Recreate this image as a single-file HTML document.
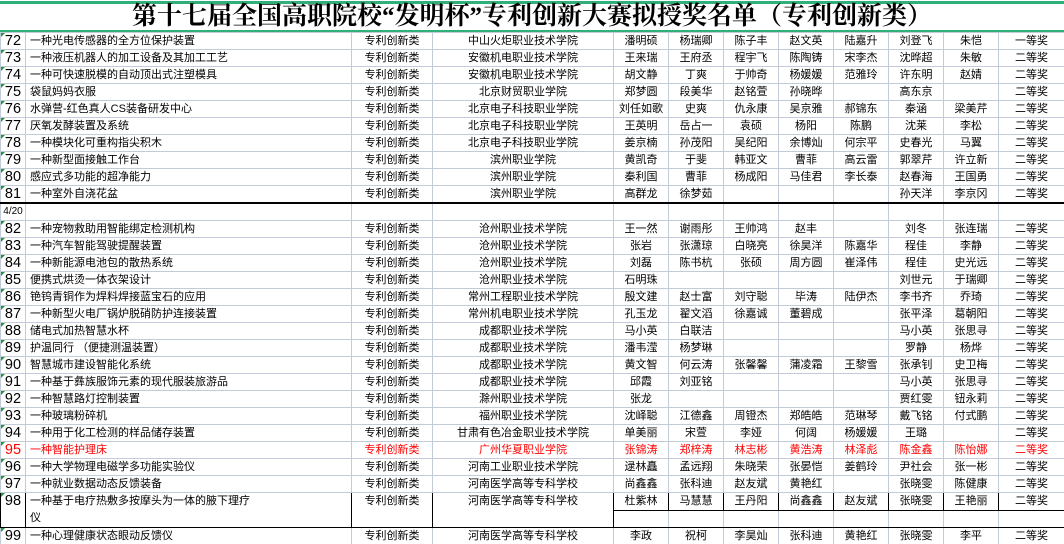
<!DOCTYPE html>
<html><head><meta charset="utf-8">
<style>
html,body{margin:0;padding:0;background:#fff;width:1064px;height:544px;overflow:hidden;}
body{font-family:"Liberation Sans","Noto Sans CJK SC",sans-serif;position:relative;}
.gl{position:absolute;left:0;width:1064px;height:3px;background:#2fb07a;}
.title{position:absolute;left:0;top:2px;width:1064px;height:28px;text-align:center;font-family:"Liberation Serif","Noto Serif CJK SC",serif;font-weight:bold;font-size:25px;line-height:30px;color:#000;}
table{position:absolute;left:0;top:32px;border-collapse:collapse;table-layout:fixed;width:1064px;}
td{border:1px solid #c3cad8;height:16px;padding:0;font-size:11px;line-height:16px;text-align:center;white-space:nowrap;overflow:hidden;color:#000;}
td.n{font-size:14.5px;text-align:center;position:relative;}
td.n::before{content:"";position:absolute;left:0;top:0;border-top:4px solid #1a9a3a;border-right:4px solid transparent;}
td.t{text-align:left;padding-left:4px;}
tr.red td{color:#ff0000;}
tr.thick td{border-bottom:2px solid #000;}
td.bk{border:1px solid #000;}
.sm{font-size:10px;}
</style></head><body>
<div class="gl" style="top:1px"></div>
<div class="title">第十七届全国高职院校“发明杯”专利创新大赛拟授奖名单（专利创新类）</div>
<div class="gl" style="top:30px"></div>
<table>
<colgroup><col style="width:25px"><col style="width:326px"><col style="width:81px"><col style="width:181px"><col style="width:55px"><col style="width:55px"><col style="width:55px"><col style="width:55px"><col style="width:55px"><col style="width:55px"><col style="width:55px"><col style="width:66px"></colgroup>
<tr><td class="n">72</td><td class="t">一种光电传感器的全方位保护装置</td><td>专利创新类</td><td>中山火炬职业技术学院</td><td>潘明硕</td><td>杨瑞卿</td><td>陈子丰</td><td>赵文英</td><td>陆嘉升</td><td>刘登飞</td><td>朱恺</td><td>一等奖</td></tr>
<tr><td class="n">73</td><td class="t">一种液压机器人的加工设备及其加工工艺</td><td>专利创新类</td><td>安徽机电职业技术学院</td><td>王来瑞</td><td>王府丞</td><td>程宇飞</td><td>陈陶铸</td><td>宋李杰</td><td>沈晔超</td><td>朱敏</td><td>二等奖</td></tr>
<tr><td class="n">74</td><td class="t">一种可快速脱模的自动顶出式注塑模具</td><td>专利创新类</td><td>安徽机电职业技术学院</td><td>胡文静</td><td>丁爽</td><td>于帅奇</td><td>杨媛媛</td><td>范雅玲</td><td>许东明</td><td>赵婧</td><td>二等奖</td></tr>
<tr><td class="n">75</td><td class="t">袋鼠妈妈衣服</td><td>专利创新类</td><td>北京财贸职业学院</td><td>郑梦圆</td><td>段美华</td><td>赵铭萱</td><td>孙晓晔</td><td></td><td>高东京</td><td></td><td>二等奖</td></tr>
<tr><td class="n">76</td><td class="t">水弹营-红色真人CS装备研发中心</td><td>专利创新类</td><td>北京电子科技职业学院</td><td>刘任如歌</td><td>史爽</td><td>仇永康</td><td>吴京雅</td><td>郝锦东</td><td>秦涵</td><td>梁美芹</td><td>二等奖</td></tr>
<tr><td class="n">77</td><td class="t">厌氧发酵装置及系统</td><td>专利创新类</td><td>北京电子科技职业学院</td><td>王英明</td><td>岳占一</td><td>袁硕</td><td>杨阳</td><td>陈鹏</td><td>沈莱</td><td>李松</td><td>二等奖</td></tr>
<tr><td class="n">78</td><td class="t">一种模块化可重构指尖积木</td><td>专利创新类</td><td>北京电子科技职业学院</td><td>姜京楠</td><td>孙茂阳</td><td>吴纪阳</td><td>余博灿</td><td>何宗平</td><td>史春光</td><td>马翼</td><td>二等奖</td></tr>
<tr><td class="n">79</td><td class="t">一种新型面接触工作台</td><td>专利创新类</td><td>滨州职业学院</td><td>黄凯奇</td><td>于斐</td><td>韩亚文</td><td>曹菲</td><td>高云雷</td><td>郭翠芹</td><td>许立新</td><td>二等奖</td></tr>
<tr><td class="n">80</td><td class="t">感应式多功能的超净能力</td><td>专利创新类</td><td>滨州职业学院</td><td>秦利国</td><td>曹菲</td><td>杨成阳</td><td>马佳君</td><td>李长泰</td><td>赵春海</td><td>王国勇</td><td>二等奖</td></tr>
<tr class="thick"><td class="n">81</td><td class="t">一种室外自浇花盆</td><td>专利创新类</td><td>滨州职业学院</td><td>高群龙</td><td>徐梦茹</td><td></td><td></td><td></td><td>孙天洋</td><td>李京冈</td><td>二等奖</td></tr>
<tr><td class="sm">4/20</td><td></td><td></td><td></td><td></td><td></td><td></td><td></td><td></td><td></td><td></td><td></td></tr>
<tr><td class="n">82</td><td class="t">一种宠物救助用智能绑定检测机构</td><td>专利创新类</td><td>沧州职业技术学院</td><td>王一然</td><td>谢雨彤</td><td>王帅鸿</td><td>赵丰</td><td></td><td>刘冬</td><td>张连瑞</td><td>二等奖</td></tr>
<tr><td class="n">83</td><td class="t">一种汽车智能驾驶提醒装置</td><td>专利创新类</td><td>沧州职业技术学院</td><td>张岩</td><td>张潇琼</td><td>白晓亮</td><td>徐昊洋</td><td>陈嘉华</td><td>程佳</td><td>李静</td><td>二等奖</td></tr>
<tr><td class="n">84</td><td class="t">一种新能源电池包的散热系统</td><td>专利创新类</td><td>沧州职业技术学院</td><td>刘磊</td><td>陈书杭</td><td>张硕</td><td>周方圆</td><td>崔泽伟</td><td>程佳</td><td>史光远</td><td>二等奖</td></tr>
<tr><td class="n">85</td><td class="t">便携式烘烫一体衣架设计</td><td>专利创新类</td><td>沧州职业技术学院</td><td>石明珠</td><td></td><td></td><td></td><td></td><td>刘世元</td><td>于瑞卿</td><td>二等奖</td></tr>
<tr><td class="n">86</td><td class="t">铯钨青铜作为焊料焊接蓝宝石的应用</td><td>专利创新类</td><td>常州工程职业技术学院</td><td>殷文建</td><td>赵士富</td><td>刘守聪</td><td>毕涛</td><td>陆伊杰</td><td>李书齐</td><td>乔琦</td><td>二等奖</td></tr>
<tr><td class="n">87</td><td class="t">一种新型火电厂锅炉脱硝防护连接装置</td><td>专利创新类</td><td>常州机电职业技术学院</td><td>孔玉龙</td><td>翟文滔</td><td>徐嘉诚</td><td>董碧成</td><td></td><td>张平泽</td><td>葛朝阳</td><td>二等奖</td></tr>
<tr><td class="n">88</td><td class="t">储电式加热智慧水杯</td><td>专利创新类</td><td>成都职业技术学院</td><td>马小英</td><td>白联洁</td><td></td><td></td><td></td><td>马小英</td><td>张思寻</td><td>二等奖</td></tr>
<tr><td class="n">89</td><td class="t">护温同行 （便捷测温装置）</td><td>专利创新类</td><td>成都职业技术学院</td><td>潘韦滢</td><td>杨梦琳</td><td></td><td></td><td></td><td>罗静</td><td>杨烨</td><td>二等奖</td></tr>
<tr><td class="n">90</td><td class="t">智慧城市建设智能化系统</td><td>专利创新类</td><td>成都职业技术学院</td><td>黄文智</td><td>何云涛</td><td>张馨馨</td><td>蒲凌霜</td><td>王黎雪</td><td>张承钊</td><td>史卫梅</td><td>二等奖</td></tr>
<tr><td class="n">91</td><td class="t">一种基于彝族服饰元素的现代服装旅游品</td><td>专利创新类</td><td>成都职业技术学院</td><td>邱霞</td><td>刘亚铭</td><td></td><td></td><td></td><td>马小英</td><td>张思寻</td><td>二等奖</td></tr>
<tr><td class="n">92</td><td class="t">一种智慧路灯控制装置</td><td>专利创新类</td><td>滁州职业技术学院</td><td>张龙</td><td></td><td></td><td></td><td></td><td>贾红雯</td><td>钮永莉</td><td>二等奖</td></tr>
<tr><td class="n">93</td><td class="t">一种玻璃粉碎机</td><td>专利创新类</td><td>福州职业技术学院</td><td>沈峄聪</td><td>江德鑫</td><td>周镫杰</td><td>郑皓皓</td><td>范琳琴</td><td>戴飞铭</td><td>付式鹏</td><td>二等奖</td></tr>
<tr><td class="n">94</td><td class="t">一种用于化工检测的样品储存装置</td><td>专利创新类</td><td>甘肃有色冶金职业技术学院</td><td>单美丽</td><td>宋萱</td><td>李娅</td><td>何阔</td><td>杨媛媛</td><td>王璐</td><td></td><td>二等奖</td></tr>
<tr class="red"><td class="n">95</td><td class="t">一种智能护理床</td><td>专利创新类</td><td>广州华夏职业学院</td><td>张锦涛</td><td>郑梓涛</td><td>林志彬</td><td>黄浩涛</td><td>林泽彪</td><td>陈金鑫</td><td>陈怡娜</td><td>二等奖</td></tr>
<tr><td class="n">96</td><td class="t">一种大学物理电磁学多功能实验仪</td><td>专利创新类</td><td>河南工业职业技术学院</td><td>逯林矗</td><td>孟远翔</td><td>朱晓荣</td><td>张晏恺</td><td>姜鹤玲</td><td>尹社会</td><td>张一彬</td><td>二等奖</td></tr>
<tr><td class="n">97</td><td class="t">一种就业数据动态反馈装备</td><td>专利创新类</td><td>河南医学高等专科学校</td><td>尚鑫鑫</td><td>张科迪</td><td>赵友斌</td><td>黄艳红</td><td></td><td>张晓雯</td><td>陈健康</td><td>二等奖</td></tr>
<tr><td class="n bk" rowspan="2" style="vertical-align:top">98</td><td class="t bk" rowspan="2" style="line-height:17px;white-space:normal;vertical-align:top">一种基于电疗热敷多按摩头为一体的腋下理疗<br>仪</td><td class="bk" rowspan="2" style="vertical-align:top">专利创新类</td><td class="bk" rowspan="2" style="vertical-align:top">河南医学高等专科学校</td><td class="bk">杜紫林</td><td class="bk">马慧慧</td><td class="bk">王丹阳</td><td class="bk">尚鑫鑫</td><td class="bk">赵友斌</td><td class="bk">张晓雯</td><td class="bk">王艳丽</td><td class="bk">二等奖</td></tr>
<tr><td style="border-bottom:1px solid #000"></td><td style="border-bottom:1px solid #000"></td><td style="border-bottom:1px solid #000"></td><td style="border-bottom:1px solid #000"></td><td style="border-bottom:1px solid #000"></td><td style="border-bottom:1px solid #000"></td><td style="border-bottom:1px solid #000"></td><td style="border-bottom:1px solid #000;border-right:1px solid #000"></td></tr>
<tr><td class="n">99</td><td class="t">一种心理健康状态眼动反馈仪</td><td>专利创新类</td><td>河南医学高等专科学校</td><td>李政</td><td>祝柯</td><td>李昊灿</td><td>张科迪</td><td>黄艳红</td><td>张晓雯</td><td>李平</td><td>二等奖</td></tr>
</table>
</body></html>
